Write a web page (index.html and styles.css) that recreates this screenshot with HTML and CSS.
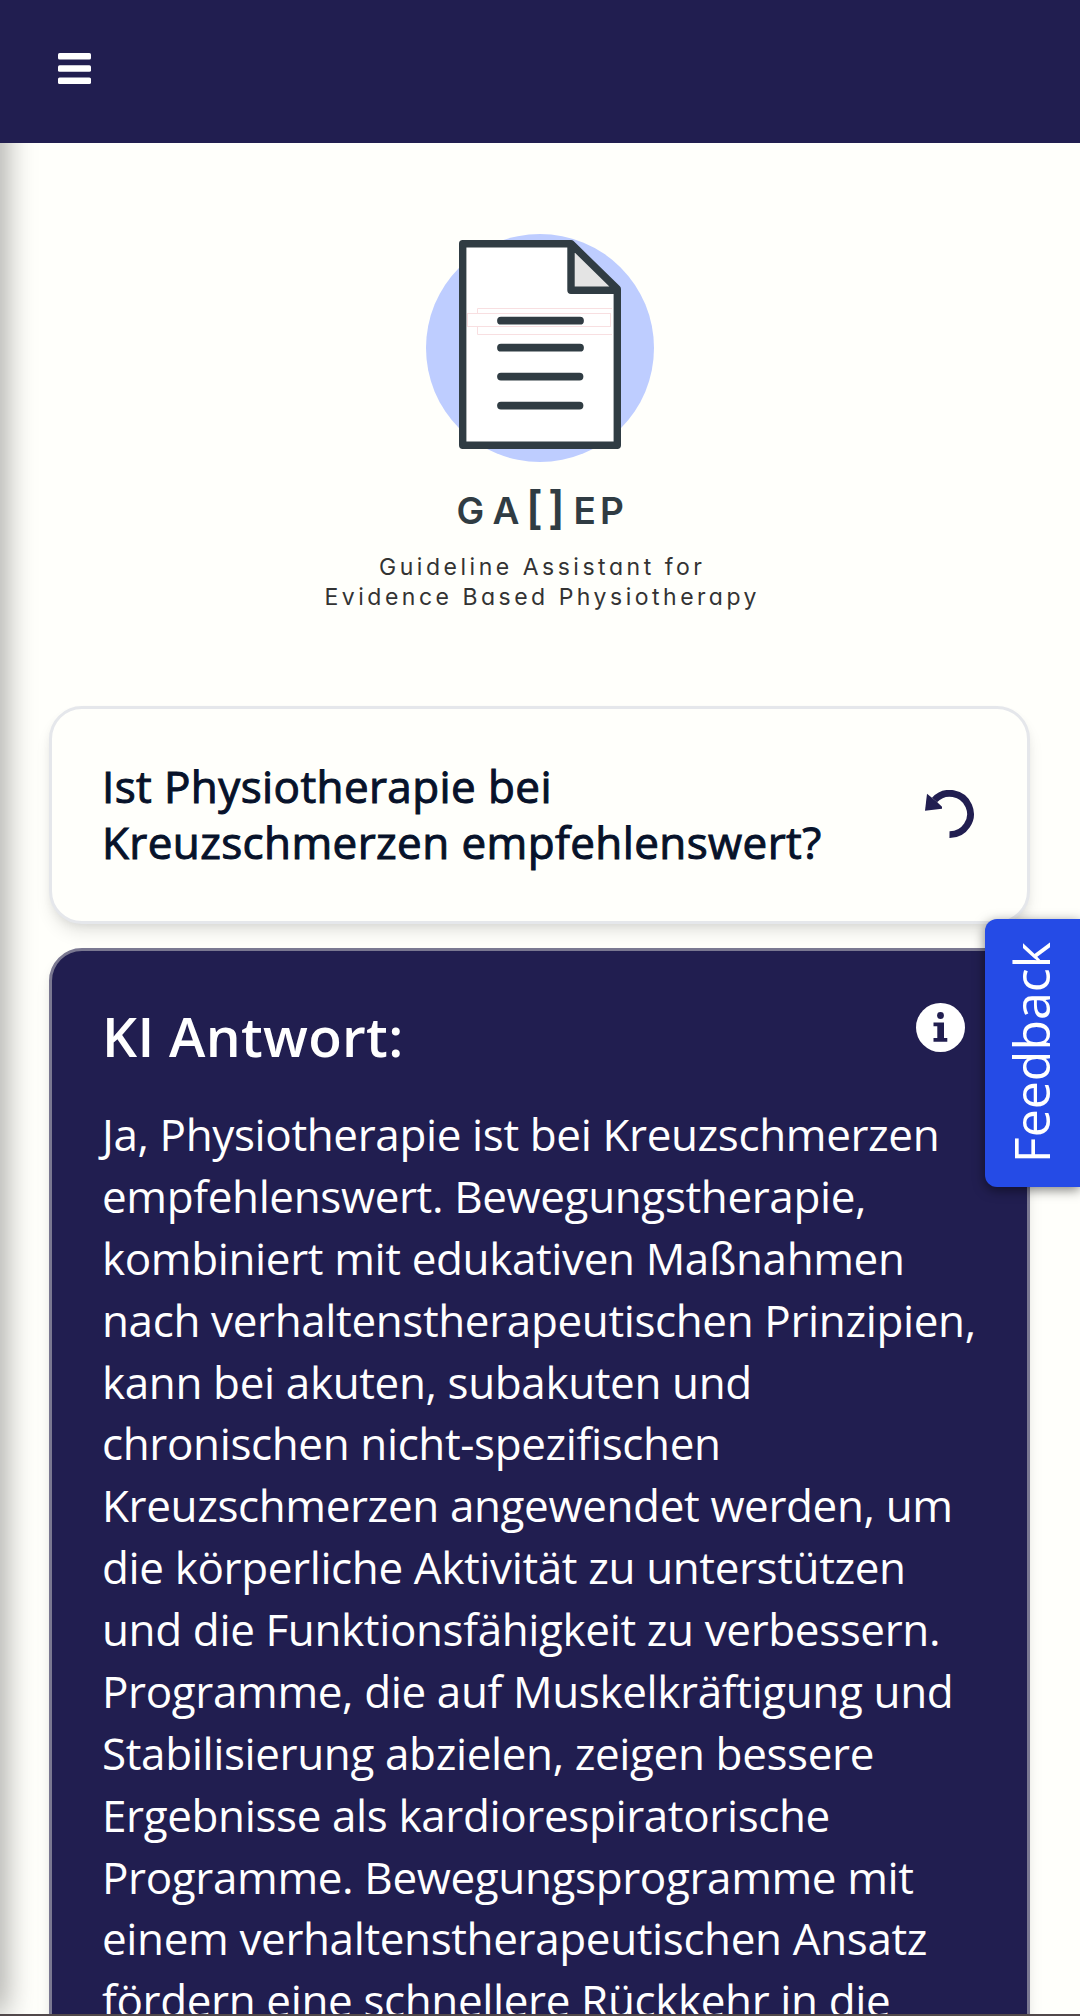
FILE: index.html
```html
<!DOCTYPE html>
<html lang="de">
<head>
<meta charset="utf-8">
<title>GALEP</title>
<link rel="stylesheet" href="styles.css">
</head>
<body>
<div class="app">
  <header class="topbar">
    <svg class="menu-icon" width="33" height="31" viewBox="0 0 33 31" fill="#fff"><rect width="33" height="6.5" rx="1.6"/><rect y="12.3" width="33" height="6.5" rx="1.6"/><rect y="24.5" width="33" height="6.5" rx="1.6"/></svg>
  </header>
  <main class="content">
    <div class="drawer-edge"></div>
    <svg class="logo" width="460" height="400" viewBox="310 230 460 400">
      <circle cx="540" cy="348" r="114" fill="#becdff"/>
      <path d="M462.7 243.7H571L617.3 289V445.3H462.7Z" fill="#fff"/>
      <g fill="none" stroke="#f8dfe1" stroke-width="1"><path d="M612 308.5H477.5V334.5H612"/><rect x="467.5" y="313.5" width="143" height="13" fill="#fff"/></g>
      <path d="M571 244V290.2H617Z" fill="#e4e4e4"/>
      <path d="M462.7 243.7H571L617.3 289V445.3H462.7ZM571 244V290.2H617" fill="none" stroke="#303c43" stroke-width="7.4" stroke-linejoin="round"/>
      <path d="M501 320.7H580M501 347.7H580M501 376.6H579.5M501 405.6H579.5" stroke="#303c43" stroke-width="7.8" stroke-linecap="round"/>
      <g class="wordmark"><text x="456.5 492.5" y="523.5">GA</text><text x="526" y="524" class="bracket">[</text><text x="548" y="524" class="bracket">]</text><text x="573.500 600" y="523.5">EP</text></g>
      <g class="tagline"><text x="379" y="574.5" textLength="323">Guideline Assistant for</text><text x="324.500" y="605" textLength="432">Evidence Based Physiotherapy</text></g>
    </svg>
    <section class="card question">
      <h1>Ist Physiotherapie bei<br>Kreuzschmerzen empfehlenswert?</h1>
      <svg class="reset-icon" width="50" height="50" viewBox="0 0 50 50"><path d="M9.500 10A20.700 20.700 0 1 1 24.500 44.700" fill="none" stroke="#211e50" stroke-width="6.800"/><path d="M2 3.700L6 7L12.300 12.300L17 16.700V18.700L0 20.700Z" fill="#211e50"/></svg>
    </section>
    <section class="card answer">
      <div class="answer-head">
        <h2>KI Antwort:</h2>
        <svg class="info-icon" width="49" height="49" viewBox="0 0 49 49"><circle cx="24.500" cy="24.500" r="24.500" fill="#fff"/><g fill="#211e50"><circle cx="24.500" cy="12.500" r="3.400"/><path d="M17.500 19.500H28V35H31.300V38.700H17.500V35H21.300V23.300H17.500Z"/></g></svg>
      </div>
      <p>Ja, Physiotherapie ist bei Kreuzschmerzen<br>empfehlenswert. Bewegungstherapie,<br>kombiniert mit edukativen Maßnahmen<br>nach verhaltenstherapeutischen Prinzipien,<br>kann bei akuten, subakuten und<br>chronischen nicht-spezifischen<br>Kreuzschmerzen angewendet werden, um<br>die körperliche Aktivität zu unterstützen<br>und die Funktionsfähigkeit zu verbessern.<br>Programme, die auf Muskelkräftigung und<br>Stabilisierung abzielen, zeigen bessere<br>Ergebnisse als kardiorespiratorische<br>Programme. Bewegungsprogramme mit<br>einem verhaltenstherapeutischen Ansatz<br>fördern eine schnellere Rückkehr in die</p>
    </section>
  </main>
  <button class="feedback"><span>Feedback</span></button>
  <div class="bottom-line"></div>
</div>
</body>
</html>
```
FILE: styles.css
```css
* { box-sizing: border-box; }
body { margin: 0; font-family: "Open Sans", sans-serif; background: #fffffb; }
.app { position: relative; height: 2016px; overflow: hidden; display: flex; flex-direction: column; }
.topbar { height: 143px; flex: none; background: #211e50; padding: 53px 58px; }
.menu-icon { display: block; }
.content { position: relative; flex: 1; min-height: 0; padding: 87px 50px 0 49px; display: flex; flex-direction: column; }
.drawer-edge { position: absolute; left: -20px; top: -40px; bottom: 2px; width: 20px; box-shadow: 0 0 33px rgba(0, 0, 0, .55); clip-path: inset(40px -60px 0 0); }
.logo { flex: none; align-self: center; margin: 0 0 76px 1px; }
.wordmark { font: 600 37px Inter, sans-serif; fill: #303c43; }
.bracket { font-size: 45px; }
.tagline { font: 400 23px Inter, sans-serif; font-feature-settings: "cv11"; fill: #333; }
.card { flex: none; border: 3px solid #e5e7eb; border-radius: 33px; padding: 0 52px 0 50px; box-shadow: 0 11px 17px -3px rgba(0, 0, 0, .1), 0 4px 11px -4px rgba(0, 0, 0, .1); }
.question { height: 218px; padding-bottom: 2px; display: flex; align-items: center; justify-content: space-between; background: #fffffb; }
h1 { margin: 0; font-size: 44px; line-height: 56px; font-weight: 400; -webkit-text-stroke: 1px #07122a; letter-spacing: .4px; color: #07122a; white-space: nowrap; }
.reset-icon { flex: none; margin-top: 2px; }
.answer { margin-top: 24px; height: 1200px; padding-top: 47px; background: #211e50; border-color: #7a7891; color: #fff; }
.answer-head { display: flex; justify-content: space-between; height: 100px; padding-right: 10px; }
.info-icon { margin-top: 5px; }
h2 { margin: 0; font-size: 55px; line-height: 75px; font-weight: 600; letter-spacing: .3px; }
p { margin: 6px 0 0; font-size: 44px; line-height: 61.875px; letter-spacing: -.37px; white-space: nowrap; }
.feedback { position: absolute; left: 985px; top: 919px; width: 95px; height: 268px; padding: 0 4px 0 0; border: 0; border-radius: 12px 0 0 12px; background: #254be6; color: #fff; box-shadow: 0 3px 12px rgba(0, 0, 0, .5); font: 400 50px "Open Sans", sans-serif; display: flex; align-items: center; justify-content: center; }
.feedback span { writing-mode: vertical-rl; transform: rotate(180deg); }
.bottom-line { position: absolute; left: 0; right: 0; bottom: 0; height: 2px; background: #51484a; }
```
